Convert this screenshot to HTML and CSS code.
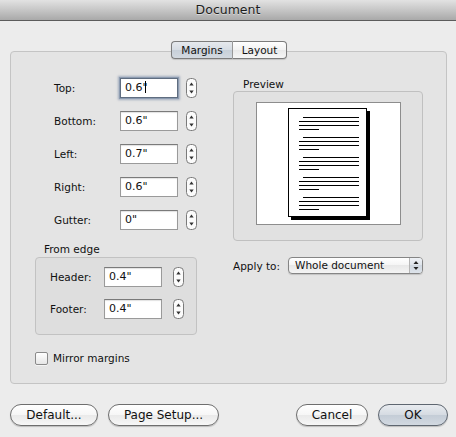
FILE: index.html
```html
<!DOCTYPE html>
<html>
<head>
<meta charset="utf-8">
<link rel="stylesheet" href="styles.css">
</head>
<body>
<div class="window">
  <div class="titlebar">Document</div>
  <div class="content">
    <div class="tabs">
      <span class="tab sel">Margins</span><span class="tab">Layout</span>
    </div>
    <div class="panel">
      <div class="left">
        <div class="rows">
          <div class="row"><span class="lbl">Top:</span><div class="field focus">0.6"<span class="caret"></span></div><svg class="stepper" width="11" height="20" viewBox="0 0 11 20"><rect x="0.5" y="0.5" width="10" height="19" rx="4" fill="#fbfbfb" stroke="#7a7a7a"/><polygon points="3.3,7.6 7.7,7.6 5.5,4.6" fill="#333"/><polygon points="3.3,12.4 7.7,12.4 5.5,15.4" fill="#333"/></svg></div>
          <div class="row"><span class="lbl">Bottom:</span><div class="field">0.6"</div><svg class="stepper" width="11" height="20" viewBox="0 0 11 20"><rect x="0.5" y="0.5" width="10" height="19" rx="4" fill="#fbfbfb" stroke="#7a7a7a"/><polygon points="3.3,7.6 7.7,7.6 5.5,4.6" fill="#333"/><polygon points="3.3,12.4 7.7,12.4 5.5,15.4" fill="#333"/></svg></div>
          <div class="row"><span class="lbl">Left:</span><div class="field">0.7"</div><svg class="stepper" width="11" height="20" viewBox="0 0 11 20"><rect x="0.5" y="0.5" width="10" height="19" rx="4" fill="#fbfbfb" stroke="#7a7a7a"/><polygon points="3.3,7.6 7.7,7.6 5.5,4.6" fill="#333"/><polygon points="3.3,12.4 7.7,12.4 5.5,15.4" fill="#333"/></svg></div>
          <div class="row"><span class="lbl">Right:</span><div class="field">0.6"</div><svg class="stepper" width="11" height="20" viewBox="0 0 11 20"><rect x="0.5" y="0.5" width="10" height="19" rx="4" fill="#fbfbfb" stroke="#7a7a7a"/><polygon points="3.3,7.6 7.7,7.6 5.5,4.6" fill="#333"/><polygon points="3.3,12.4 7.7,12.4 5.5,15.4" fill="#333"/></svg></div>
          <div class="row"><span class="lbl">Gutter:</span><div class="field">0"</div><svg class="stepper" width="11" height="20" viewBox="0 0 11 20"><rect x="0.5" y="0.5" width="10" height="19" rx="4" fill="#fbfbfb" stroke="#7a7a7a"/><polygon points="3.3,7.6 7.7,7.6 5.5,4.6" fill="#333"/><polygon points="3.3,12.4 7.7,12.4 5.5,15.4" fill="#333"/></svg></div>
        </div>
        <div class="group-title">From edge</div>
        <div class="group">
          <div class="row grow"><span class="lbl glbl">Header:</span><div class="field gfield">0.4"</div><svg class="stepper" width="11" height="20" viewBox="0 0 11 20"><rect x="0.5" y="0.5" width="10" height="19" rx="4" fill="#fbfbfb" stroke="#7a7a7a"/><polygon points="3.3,7.6 7.7,7.6 5.5,4.6" fill="#333"/><polygon points="3.3,12.4 7.7,12.4 5.5,15.4" fill="#333"/></svg></div>
          <div class="row grow"><span class="lbl glbl">Footer:</span><div class="field gfield">0.4"</div><svg class="stepper" width="11" height="20" viewBox="0 0 11 20"><rect x="0.5" y="0.5" width="10" height="19" rx="4" fill="#fbfbfb" stroke="#7a7a7a"/><polygon points="3.3,7.6 7.7,7.6 5.5,4.6" fill="#333"/><polygon points="3.3,12.4 7.7,12.4 5.5,15.4" fill="#333"/></svg></div>
        </div>
        <div class="check"><span class="cbox"></span><span>Mirror margins</span></div>
      </div>
      <div class="right">
        <div class="preview-title">Preview</div>
        <div class="preview-box">
          <div class="white">
            <div class="page">
              <div class="para"><div class="ln ind"></div><div class="ln"></div><div class="ln"></div><div class="ln short"></div></div>
              <div class="para"><div class="ln ind"></div><div class="ln"></div><div class="ln"></div><div class="ln short"></div></div>
              <div class="para"><div class="ln ind"></div><div class="ln"></div><div class="ln"></div><div class="ln short"></div></div>
              <div class="para"><div class="ln ind"></div><div class="ln"></div><div class="ln"></div><div class="ln short"></div></div>
              <div class="para"><div class="ln ind"></div><div class="ln"></div><div class="ln"></div><div class="ln short"></div></div>
            </div>
          </div>
        </div>
        <div class="apply">
          <span class="apply-lbl">Apply to:</span>
          <div class="popup"><span class="popup-text">Whole document</span><span class="popup-arrows"><svg width="8" height="15" viewBox="0 0 8 15"><polygon points="1.5,6 6.5,6 4,3" fill="#222"/><polygon points="1.5,9 6.5,9 4,12" fill="#222"/></svg></span></div>
        </div>
      </div>
    </div>
    <div class="buttons">
      <span class="btn b-default">Default...</span>
      <span class="btn b-setup">Page Setup...</span>
      <span class="spacer"></span>
      <span class="btn b-cancel">Cancel</span>
      <span class="btn b-ok">OK</span>
    </div>
  </div>
</div>
</body>
</html>
```

FILE: styles.css
```css
html, body {
  margin: 0;
  padding: 0;
}
body {
  width: 456px;
  height: 437px;
  overflow: hidden;
  background: #ececec;
  font-family: "DejaVu Sans", "Liberation Sans", sans-serif;
  color: #111;
}
.window {
  width: 456px;
  height: 437px;
  background: #ececec;
}
.titlebar {
  height: 20px;
  line-height: 20px;
  border-bottom: 1px solid #5c5c5c;
  background: linear-gradient(#e2e2e2, #c6c6c6 50%, #a9a9a9);
  text-align: center;
  font-size: 12.5px;
  color: #1d1d1d;
  text-shadow: 0 1px 0 rgba(255,255,255,0.45);
}
.content {
  padding: 20px 9px 0 10px;
}
.tabs {
  display: flex;
  justify-content: center;
  height: 18px;
  margin-bottom: -8px;
  position: relative;
  z-index: 1;
  padding-left: 1px;
}
.tab {
  box-sizing: border-box;
  height: 18px;
  line-height: 16px;
  font-size: 10.5px;
  border: 1px solid #7c7c7c;
  background: linear-gradient(#ffffff, #f2f2f2 50%, #e9e9e9 50%, #f6f6f6);
  text-align: center;
  box-shadow: 0 1px 1px rgba(0,0,0,0.15);
}
.tab.sel {
  width: 62px;
  border-radius: 4px 0 0 4px;
  background: linear-gradient(#e6e9ed, #d6dce3 50%, #c7cfd8 50%, #d3d9e0);
  border-right: 1px solid #9a9a9a;
}
.tab:not(.sel) {
  width: 54px;
  border-left: none;
  border-radius: 0 4px 4px 0;
}
.panel {
  box-sizing: border-box;
  height: 333px;
  border: 1px solid #c4c4c4;
  border-radius: 4px;
  background: #e4e4e4;
  display: grid;
  grid-template-columns: 222px 1fr;
}
.left {
  padding-top: 26px;
}
.rows {
  margin-left: 43px;
}
.row {
  display: flex;
  align-items: center;
  height: 20px;
  margin-bottom: 13px;
}
.rows .row:last-child {
  margin-bottom: 0;
}
.lbl {
  width: 66px;
  font-size: 10.5px;
  color: #111;
}
.field {
  box-sizing: border-box;
  width: 58px;
  height: 20px;
  border: 1px solid #9a9a9a;
  border-top-color: #7a7a7a;
  background: #fff;
  font-size: 11px;
  line-height: 18px;
  padding-left: 4px;
  margin-right: 8px;
  box-shadow: inset 0 1px 1px rgba(0,0,0,0.12);
}
.field.focus {
  border-color: #5f6d80;
  box-shadow: 0 0 0 1px #8c9bb0, 0 0 2px 2px rgba(110,130,160,0.55);
}
.caret {
  display: inline-block;
  width: 1px;
  height: 12px;
  background: #000;
  vertical-align: -2px;
  margin-left: -3px;
}
.stepper {
  display: block;
}
.group-title {
  margin: 13px 0 0 33px;
  height: 13px;
  line-height: 13px;
  font-size: 10.5px;
}
.group {
  box-sizing: border-box;
  margin: 1px 0 0 24px;
  width: 162px;
  height: 78px;
  border: 1px solid #c2c2c2;
  border-radius: 4px;
  background: #dedede;
  padding: 9px 0 0 14px;
}
.group .row {
  margin-bottom: 12px;
}
.glbl {
  width: 54px;
}
.gfield {
  margin-right: 11px;
}
.check {
  display: flex;
  align-items: center;
  margin: 16px 0 0 24px;
  font-size: 10.5px;
  height: 14px;
}
.cbox {
  box-sizing: border-box;
  width: 13px;
  height: 13px;
  border: 1px solid #8a8a8a;
  border-radius: 2px;
  background: linear-gradient(#ffffff, #e6e6e6);
  margin-right: 5px;
  box-shadow: 0 1px 0 rgba(255,255,255,0.6);
}
.right {
  padding-top: 26px;
}
.preview-title {
  margin-left: 10px;
  height: 13px;
  line-height: 13px;
  font-size: 10.5px;
}
.preview-box {
  box-sizing: border-box;
  width: 190px;
  height: 150px;
  border: 1px solid #c0c0c0;
  border-radius: 4px;
  background: #e1e1e1;
  padding-top: 10px;
}
.white {
  box-sizing: border-box;
  width: 145px;
  height: 123px;
  margin-left: 22px;
  border: 1px solid #8d8d8d;
  background: #fff;
  display: flex;
  justify-content: center;
  padding-top: 5px;
  padding-right: 2px;
}
.page {
  box-sizing: border-box;
  width: 79px;
  height: 109px;
  border: 1px solid #000;
  background: #fff;
  box-shadow: 3px 3px 0 #000;
  padding: 8px 0 0 10px;
  display: flex;
  flex-direction: column;
  gap: 7px;
}
.para {
  display: flex;
  flex-direction: column;
  gap: 3px;
}
.ln {
  width: 60px;
  height: 1px;
  background: #000;
}
.ln.ind {
  width: 56px;
  margin-left: 4px;
}
.ln.short {
  width: 20px;
}
.apply {
  display: flex;
  align-items: center;
  margin-top: 16px;
  height: 17px;
}
.apply-lbl {
  width: 55px;
  font-size: 10.5px;
}
.popup {
  box-sizing: border-box;
  width: 135px;
  height: 17px;
  border: 1px solid #858585;
  border-radius: 4px;
  background: linear-gradient(#ffffff, #f4f4f4 50%, #e8e8e8 50%, #f4f4f4);
  display: flex;
  align-items: center;
  box-shadow: 0 1px 1px rgba(0,0,0,0.15);
}
.popup-text {
  flex: 1;
  font-size: 10.5px;
  padding-left: 6px;
  line-height: 15px;
}
.popup-arrows {
  width: 12px;
  height: 15px;
  border-left: 1px solid #b5b5b5;
  display: flex;
  justify-content: center;
  align-items: center;
  background: linear-gradient(#eef1f5, #dde3ea 50%, #cfd7e0 50%, #dde3ea);
  border-radius: 0 3px 3px 0;
}
.popup-arrows svg {
  display: block;
}
.buttons {
  display: flex;
  margin-top: 20px;
  margin-right: -1px;
  height: 22px;
}
.btn {
  box-sizing: border-box;
  height: 22px;
  line-height: 20px;
  border: 1px solid #6e6e6e;
  border-radius: 11px;
  background: linear-gradient(#ffffff, #f6f6f6 50%, #e9e9e9 50%, #f7f7f7);
  text-align: center;
  font-size: 12px;
  color: #111;
  box-shadow: 0 1px 1px rgba(0,0,0,0.2);
}
.b-default { width: 88px; }
.b-setup { width: 111px; margin-left: 10px; }
.spacer { flex: 1; }
.b-cancel { width: 72px; }
.b-ok {
  width: 70px;
  margin-left: 10px;
  background: linear-gradient(#e8ebef, #d5dbe2 50%, #c3ccd6 50%, #d2d9e1);
  border-color: #5e6670;
}
```
